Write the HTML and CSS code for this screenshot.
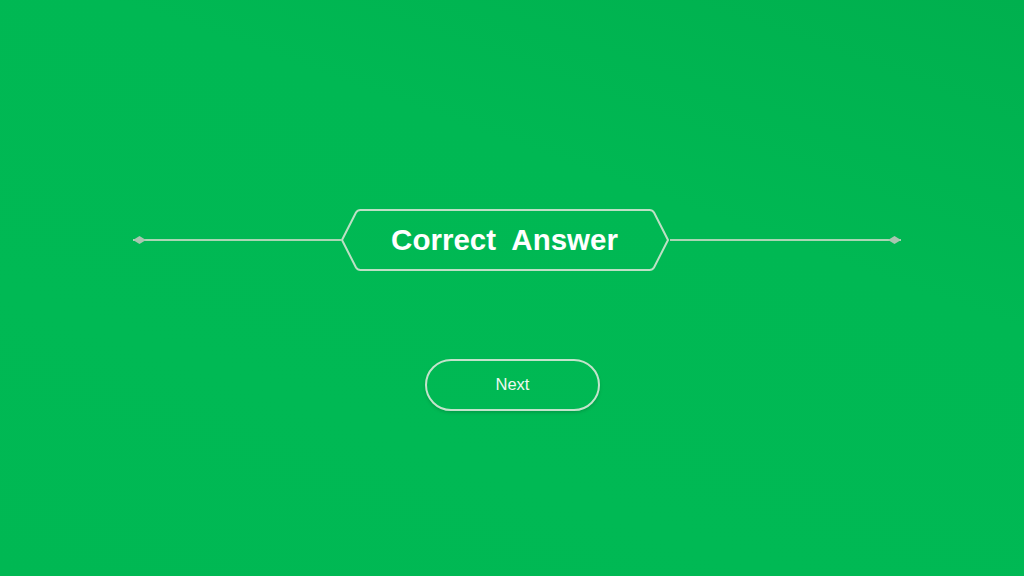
FILE: index.html
```html
<!DOCTYPE html>
<html lang="en">
<head>
<meta charset="utf-8">
<title>Correct Answer</title>
<link rel="stylesheet" href="styles.css">
</head>
<body>
<main class="screen">
  <div class="banner-row">
    <div class="rule rule-left"><span class="diamond"></span></div>
    <div class="banner">
      <svg class="banner-shape" viewBox="0 0 330 62" preserveAspectRatio="none" aria-hidden="true">
        <path d="M2 31 L16 3.5 Q17.5 1 20.5 1 L309.5 1 Q312.5 1 314 3.5 L328 31 L314 58.5 Q312.5 61 309.5 61 L20.5 61 Q17.5 61 16 58.5 Z" fill="none" stroke="#bde0c5" stroke-width="2" stroke-linejoin="round"/>
      </svg>
      <h1 class="banner-text">Correct&nbsp; Answer</h1>
    </div>
    <div class="rule rule-right"><span class="diamond"></span></div>
  </div>
  <button class="next-btn" type="button">Next</button>
</main>
</body>
</html>
```

FILE: styles.css
```css
html, body {
  margin: 0;
  padding: 0;
}
body {
  width: 1024px;
  height: 576px;
  overflow: hidden;
  background: linear-gradient(200deg, #00b04e 0%, #00b853 35%, #00b954 70%, #00b853 100%);
  font-family: "Liberation Sans", Arial, sans-serif;
}
.screen {
  display: flex;
  flex-direction: column;
  align-items: flex-start;
  height: 576px;
}
.banner-row {
  display: flex;
  align-items: center;
  margin-top: 209px;
  padding-left: 133px;
  height: 62px;
}
.rule {
  position: relative;
  height: 2px;
  background: #a9d6b4;
}
.rule-left {
  width: 208px;
}
.rule-right {
  width: 231px;
}
.diamond {
  position: absolute;
  top: -3px;
  width: 13px;
  height: 8px;
  background: #a8c6b0;
  clip-path: polygon(0 50%, 50% 0, 100% 50%, 50% 100%);
}
.rule-left .diamond {
  left: 0;
}
.rule-right .diamond {
  right: 0;
}
.banner {
  position: relative;
  width: 330px;
  height: 62px;
  display: flex;
  align-items: center;
  justify-content: center;
  margin-left: -1px;
}
.banner-shape {
  position: absolute;
  inset: 0;
  width: 100%;
  height: 100%;
}
.banner-text {
  position: relative;
  margin: 0;
  font-size: 29.5px;
  font-weight: 700;
  color: #ffffff;
  line-height: 1;
  padding-right: 1px;
}
.next-btn {
  margin-top: 88px;
  margin-left: 425px;
  width: 175px;
  height: 52px;
  border: 2px solid #c3e3cb;
  border-radius: 26px;
  background: transparent;
  color: #eef8f0;
  font-family: "Liberation Sans", Arial, sans-serif;
  font-size: 16.5px;
  padding: 0 0 2px;
  box-shadow: 0 2px 3px rgba(0, 90, 40, 0.25);
}
```
